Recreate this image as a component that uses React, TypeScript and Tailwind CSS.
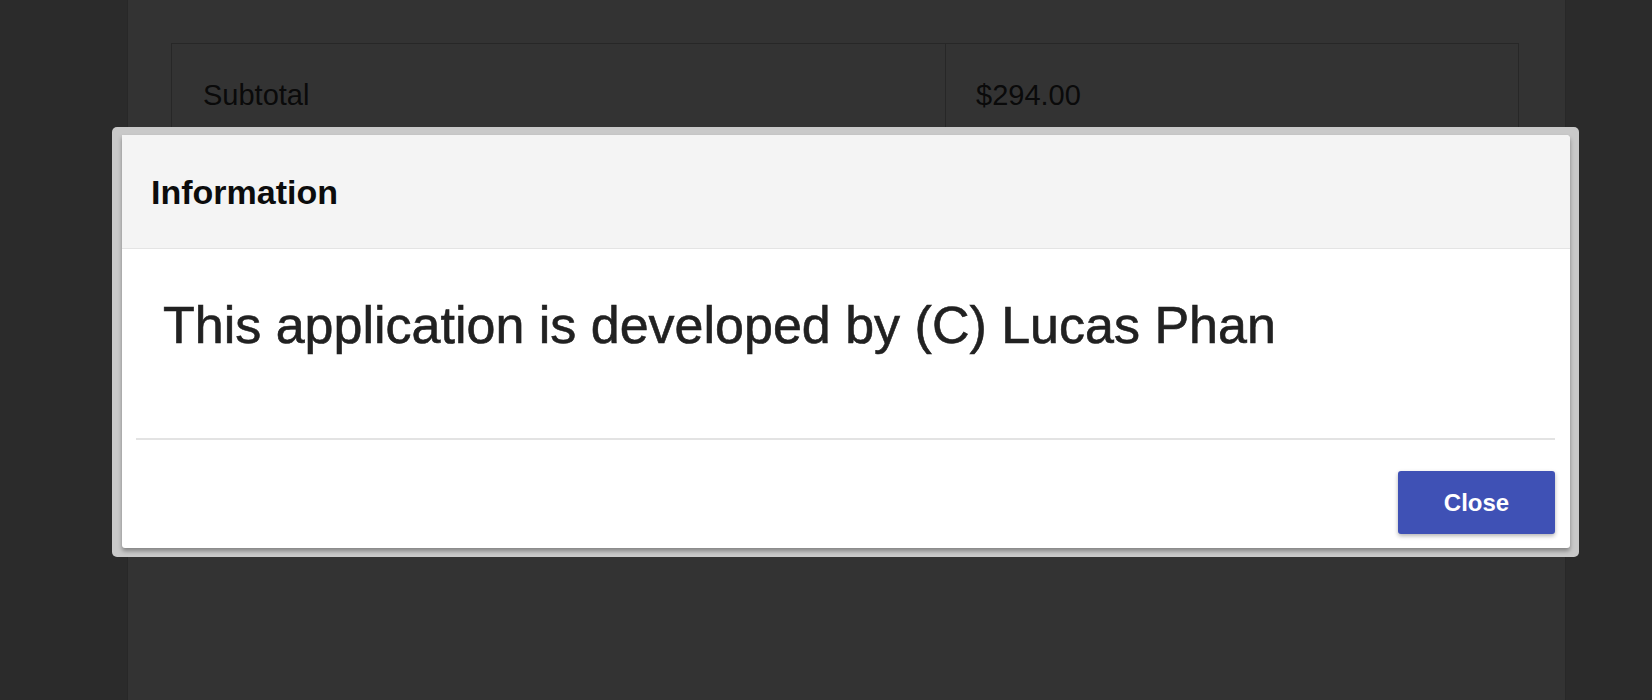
import React from 'react';

const font = { fontFamily: '"Liberation Sans", Arial, Helvetica, sans-serif' };

function InvoiceTable() {
  return (
    <div className="ml-[43px] mr-[46px] mt-[43px] border border-[#c4c4c4]">
      <div className="flex text-[29px] leading-none text-[#333]">
        <div className="w-[774px] border-r border-[#c4c4c4] px-[31px] pt-[37px] pb-[40px]">Subtotal</div>
        <div className="flex-1 px-[30px] pt-[37px] pb-[40px]">$294.00</div>
      </div>
      <div className="flex h-[110px] border-t border-[#c4c4c4]">
        <div className="w-[774px] border-r border-[#c4c4c4]" />
        <div className="flex-1" />
      </div>
    </div>
  );
}

function InfoModal() {
  return (
    <div className="absolute left-[112px] top-[127px] w-[1467px] rounded-[5px] bg-[#c9c9c9] pt-[8px] pl-[10px] pr-[9px] pb-[9px]">
      <div className="flex flex-col rounded-tr-[4px] rounded-b-[3px] bg-white shadow-[0_3px_4px_rgba(0,0,0,0.35)]">
        {/* Header */}
        <div className="flex h-[114px] items-center rounded-tr-[4px] border-b border-[#e4e4e4] bg-[#f4f4f4] px-[29px]">
          <h2 className="text-[34px] font-bold leading-none text-[#0c0c0c]">Information</h2>
        </div>

        {/* Body */}
        <div className="h-[189px] pl-[41px] pt-[50px]">
          <p className="text-[52px] leading-none text-[#212121] [-webkit-text-stroke:0.6px_#212121]">
            This application is developed by (C) Lucas Phan
          </p>
        </div>

        <div className="ml-[14px] mr-[15px] h-[2px] bg-[#e3e3e3]" />

        {/* Footer */}
        <div className="flex justify-end pt-[31px] pr-[15px] pb-[14px]">
          <button className="flex h-[63px] w-[157px] items-center justify-center rounded-[3px] bg-[#3f51b5] text-[24px] font-bold text-white shadow-[0_2px_4px_rgba(0,0,0,0.3)]">
            Close
          </button>
        </div>
      </div>
    </div>
  );
}

export default function App() {
  return (
    <div className="relative h-[700px] w-full overflow-hidden bg-[#d7d7d7]" style={font}>
      <div className="flex h-full">
        <div className="w-[127px] shrink-0" />
        <div className="h-full w-[1439px] shrink-0 border-x border-[#c8c8c8] bg-white">
          <InvoiceTable />
        </div>
        <div className="flex-1" />
      </div>

      {/* Overlay */}
      <div className="absolute inset-0 bg-black/80" />

      <InfoModal />
    </div>
  );
}
